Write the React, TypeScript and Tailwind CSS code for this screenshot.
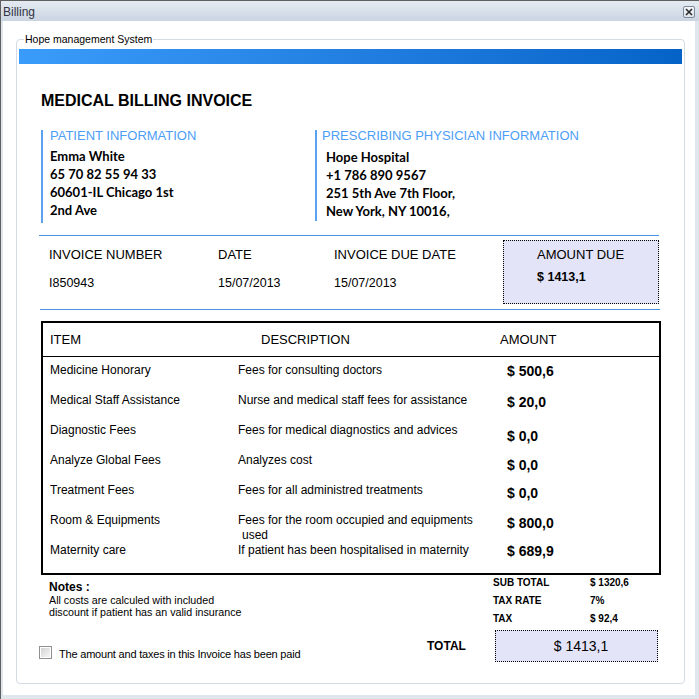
import React from "react";

type Row = { item: string; desc: React.ReactNode; amount: string; pad: string };

const rows: Row[] = [
  { item: "Medicine Honorary", desc: "Fees for consulting doctors", amount: "$ 500,6", pad: "pt-[1px]" },
  { item: "Medical Staff Assistance", desc: "Nurse and medical staff fees for assistance", amount: "$ 20,0", pad: "pt-[2px]" },
  { item: "Diagnostic Fees", desc: "Fees for medical diagnostics and advices", amount: "$ 0,0", pad: "pt-[6px]" },
  { item: "Analyze Global Fees", desc: "Analyzes cost", amount: "$ 0,0", pad: "pt-[5px]" },
  { item: "Treatment Fees", desc: "Fees for all administred treatments", amount: "$ 0,0", pad: "pt-[3px]" },
  {
    item: "Room & Equipments",
    desc: (
      <>
        Fees for the room occupied and equipments
        <br />
        <span className="pl-[4px]">used</span>
      </>
    ),
    amount: "$ 800,0",
    pad: "pt-[3px]",
  },
  { item: "Maternity care", desc: "If patient has been hospitalised in maternity", amount: "$ 689,9", pad: "pt-[1px]" },
];

const patient = ["Emma White", "65 70 82 55 94 33", "60601-IL Chicago 1st", "2nd Ave"];
const physician = ["Hope Hospital", "+1 786 890 9567", "251 5th Ave 7th Floor,", "New York, NY 10016,"];

const totals = [
  ["SUB TOTAL", "$ 1320,6"],
  ["TAX RATE", "7%"],
  ["TAX", "$ 92,4"],
];

export default function App() {
  return (
    <div className="w-[699px] h-[699px] overflow-hidden flex flex-col border-t border-l border-[#5f5f5f] bg-[#dfe6ee] text-black font-['Liberation_Sans',Arial,sans-serif]">
      {/* Title bar */}
      <div className="h-[20px] shrink-0 flex items-center justify-between pl-[2px] pr-[4px] bg-gradient-to-b from-[#e5ebf1] to-[#cad5e2]">
        <span className="mt-[1px] text-[12px] leading-[14px] text-[#333344]">Billing</span>
        <div className="w-[12px] h-[12px] mt-[1px] border border-[#7d8a9c] rounded-[2px] bg-gradient-to-b from-[#f4f6f9] to-[#dde3ea] flex items-center justify-center">
          <svg width="8" height="8" viewBox="0 0 8 8">
            <path d="M1 1L7 7M7 1L1 7" stroke="#2a2a2a" strokeWidth="1.6" />
          </svg>
        </div>
      </div>

      {/* Window body */}
      <div className="flex-1 ml-[2px] mr-[4px] mb-[4px] bg-white pt-[18px] pl-[13px]">
        <div className="relative w-[669px] h-[645px] border border-[#d3dce6] rounded-[4px]">
          <span className="absolute -top-[8px] left-[7px] bg-white px-[1px] text-[10.5px] leading-[14px] text-black">
            Hope management System
          </span>

          {/* Blue header bar */}
          <div className="mt-[9px] ml-[2px] w-[663px] h-[15px] bg-gradient-to-r from-[#3a9cfa] to-[#0563c8]" />

          <h1 className="mt-[28px] ml-[24px] text-[16px] leading-[18px] font-bold">MEDICAL BILLING INVOICE</h1>

          {/* Patient / physician */}
          <div className="mt-[20px] ml-[24px] flex">
            <div className="w-[274px] h-[93px] border-l-2 border-[#5ba3f0] pl-[7px]">
              <p className="text-[13px] leading-[12px] text-[#4d9ef7]">PATIENT INFORMATION</p>
              <div className="mt-[5px] font-['Lato',sans-serif] font-bold text-[13px] leading-[18px]">
                {patient.map((l) => (
                  <p key={l}>{l}</p>
                ))}
              </div>
            </div>
            <div className="h-[91px] border-l-2 border-[#5ba3f0] pl-[5px]">
              <p className="text-[13px] leading-[12px] text-[#4d9ef7]">PRESCRIBING PHYSICIAN INFORMATION</p>
              <div className="mt-[6px] pl-[4px] font-['Lato',sans-serif] font-bold text-[13px] leading-[18px]">
                {physician.map((l) => (
                  <p key={l}>{l}</p>
                ))}
              </div>
            </div>
          </div>

          <div className="mt-[12px] ml-[22px] w-[620px] h-px bg-[#4a91e0]" />

          {/* Invoice numbers */}
          <div className="mt-[4px] ml-[32px] h-[64px] flex">
            <div className="w-[169px] pt-[7px]">
              <p className="text-[13px] leading-[16px]">INVOICE NUMBER</p>
              <p className="mt-[12px] text-[12.5px] leading-[16px]">I850943</p>
            </div>
            <div className="w-[116px] pt-[7px]">
              <p className="text-[13px] leading-[16px]">DATE</p>
              <p className="mt-[12px] text-[12.5px] leading-[16px]">15/07/2013</p>
            </div>
            <div className="w-[169px] pt-[7px]">
              <p className="text-[13px] leading-[16px]">INVOICE DUE DATE</p>
              <p className="mt-[12px] text-[12.5px] leading-[16px]">15/07/2013</p>
            </div>
            <div className="w-[156px] h-[64px] border border-dotted border-black bg-[#e4e4f8] pl-[33px] pt-[6px]">
              <p className="text-[13px] leading-[16px]">AMOUNT DUE</p>
              <p className="mt-[6px] text-[12.5px] leading-[16px] font-bold">$ 1413,1</p>
            </div>
          </div>

          <div className="mt-[5px] ml-[23px] w-[620px] h-px bg-[#4a91e0]" />

          {/* Items table */}
          <div className="mt-[11px] ml-[24px] w-[620px] border-2 border-black">
            <div className="h-[34px] border-b border-black flex items-center pl-[7px] text-[13px]">
              <span className="w-[211px]">ITEM</span>
              <span className="w-[239px]">DESCRIPTION</span>
              <span>AMOUNT</span>
            </div>
            <div className="pb-[6px]">
              {rows.map((r) => (
                <div key={r.item} className="h-[30px] pt-[6px] pl-[7px] flex text-[12px] leading-[15px]">
                  <span className="w-[188px] whitespace-nowrap">{r.item}</span>
                  <span className="w-[269px] whitespace-nowrap">{r.desc}</span>
                  <span className={`${r.pad} text-[14px] font-bold`}>{r.amount}</span>
                </div>
              ))}
            </div>
          </div>

          {/* Notes and totals */}
          <div className="flex">
            <div className="ml-[32px] w-[444px] pt-[5px]">
              <p className="text-[12px] leading-[14px] font-bold">Notes :</p>
              <div className="text-[10.7px] leading-[12px]">
                <p>All costs are calculed with included</p>
                <p>discount if patient has an valid insurance</p>
              </div>
            </div>
            <div className="-mt-[1px] flex flex-col">
              {totals.map(([k, v]) => (
                <div key={k} className="flex text-[10px] leading-[18px] font-bold">
                  <span className="w-[97px]">{k}</span>
                  <span>{v}</span>
                </div>
              ))}
            </div>
          </div>

          <div className="flex items-start">
            <div className="ml-[22px] w-[388px] mt-[18px] flex items-start">
              <div className="w-[13px] h-[13px] border border-[#8f8f8f] p-px">
                <div className="w-full h-full bg-gradient-to-br from-[#d2d2d2] to-[#f7f7f7]" />
              </div>
              <span className="ml-[7px] mt-[1px] text-[11px] leading-[14px] tracking-[-0.2px]">
                The amount and taxes in this Invoice has been paid
              </span>
            </div>
            <span className="w-[68px] mt-[10px] text-[12px] leading-[16px] font-bold">TOTAL</span>
            <div className="mt-[2px] w-[163px] h-[32px] border border-dotted border-black bg-[#e4e4f8] flex items-center justify-center pl-[9px] text-[14px]">
              $ 1413,1
            </div>
          </div>
        </div>
      </div>
    </div>
  );
}
